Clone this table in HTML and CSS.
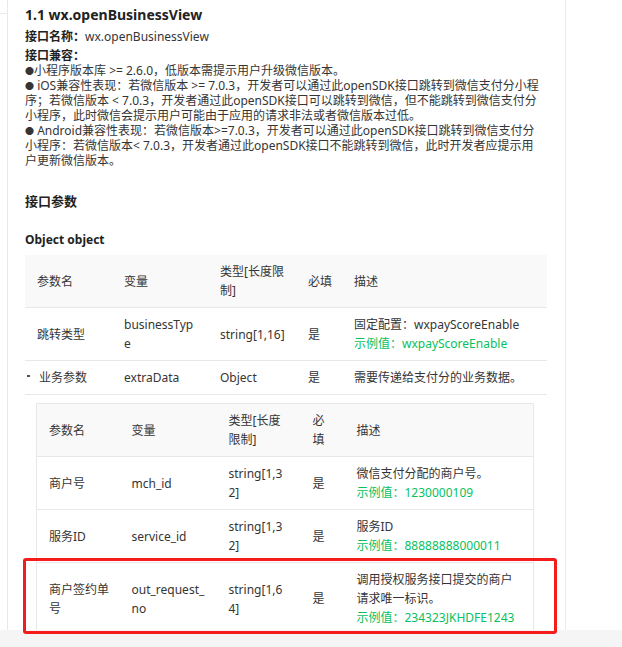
FILE: index.html
```html
<!DOCTYPE html>
<html lang="zh-CN">
<head>
    <meta charset="UTF-8">
    <meta name="viewport" content="width=device-width, initial-scale=1.0">
    <title>wx.openBusinessView</title>
    <link rel="stylesheet" href="styles.css">
</head>
<body>

<div class="screen">
    <div class="page">
        <aside class="sidebar"><div class="sidebar-top"></div></aside>

        <main class="doc">
            <h2 class="title">1.1 wx.openBusinessView</h2>
            <p class="field"><b>接口名称：</b>wx.openBusinessView</p>
            <div class="compat">
                <b>接口兼容：</b><br>
                <span class="dot">●</span>小程序版本库 &gt;= 2.6.0，低版本需提示用户升级微信版本。<br>
                <span class="dot">●</span> iOS兼容性表现：若微信版本 &gt;= 7.0.3，开发者可以通过此openSDK接口跳转到微信支付分小程序；若微信版本 &lt; 7.0.3，开发者通过此openSDK接口可以跳转到微信，但不能跳转到微信支付分小程序，此时微信会提示用户可能由于应用的请求非法或者微信版本过低。<br>
                <span class="dot">●</span> Android兼容性表现：若微信版本&gt;=7.0.3，开发者可以通过此openSDK接口跳转到微信支付分小程序：若微信版本&lt; 7.0.3，开发者通过此openSDK接口不能跳转到微信，此时开发者应提示用户更新微信版本。
            </div>

            <h3 class="section">接口参数</h3>
            <h4 class="obj">Object object</h4>

            <table class="params outer">
                <colgroup>
                    <col style="width: 87px"><col style="width: 96px"><col style="width: 88px"><col style="width: 46px"><col>
                </colgroup>
                <thead>
                    <tr><th>参数名</th><th>变量</th><th>类型[长度限制]</th><th>必填</th><th>描述</th></tr>
                </thead>
                <tbody>
                    <tr>
                        <td>跳转类型</td>
                        <td>businessType</td>
                        <td>string[1,16]</td>
                        <td>是</td>
                        <td>固定配置：wxpayScoreEnable<br><span class="example">示例值：wxpayScoreEnable</span></td>
                    </tr>
                    <tr>
                        <td><span class="toggle"></span>业务参数</td>
                        <td>extraData</td>
                        <td>Object</td>
                        <td>是</td>
                        <td>需要传递给支付分的业务数据。</td>
                    </tr>
                    <tr>
                        <td class="nested-cell" colspan="5">
                            <table class="params inner">
                                <colgroup>
                                    <col style="width: 83px"><col style="width: 97px"><col style="width: 84px"><col style="width: 44px"><col>
                                </colgroup>
                                <thead>
                                    <tr><th>参数名</th><th>变量</th><th>类型[长度限制]</th><th>必填</th><th>描述</th></tr>
                                </thead>
                                <tbody>
                                    <tr>
                                        <td>商户号</td>
                                        <td>mch_id</td>
                                        <td>string[1,32]</td>
                                        <td>是</td>
                                        <td>微信支付分配的商户号。<br><span class="example">示例值：1230000109</span></td>
                                    </tr>
                                    <tr>
                                        <td>服务ID</td>
                                        <td>service_id</td>
                                        <td>string[1,32]</td>
                                        <td>是</td>
                                        <td>服务ID<br><span class="example">示例值：88888888000011</span></td>
                                    </tr>
                                    <tr>
                                        <td>商户签约单号</td>
                                        <td>out_request_no</td>
                                        <td>string[1,64]</td>
                                        <td>是</td>
                                        <td>调用授权服务接口提交的商户请求唯一标识。<br><span class="example">示例值：234323JKHDFE1243</span></td>
                                    </tr>
                                </tbody>
                            </table>
                        </td>
                    </tr>
                </tbody>
            </table>
        </main>

        <div class="right-pane"></div>
    </div>

    <div class="scroll-track"></div>

    <!-- выделение строки -->
    <div class="highlight"></div>
</div>

</body>
</html>
```

FILE: styles.css
```css
* {
    margin: 0;
    padding: 0;
    box-sizing: border-box;
}
body {
    font-family: "Noto Sans", "Noto Sans CJK SC", sans-serif;
    font-size: 12px;
    color: #353535;
    background-color: #fff;
    text-spacing-trim: space-all;
}
.screen {
    position: relative;
    width: 622px;
    height: 647px;
    overflow: hidden;
}
.page {
    display: flex;
    height: 630px;
    overflow: hidden;
}
.sidebar {
    width: 8px;
    flex-shrink: 0;
    border-right: 1px solid #e9e9e9;
}
.sidebar-top {
    height: 14px;
    border-bottom: 1px solid #e9e9e9;
}
.doc {
    width: 558px;
    flex-shrink: 0;
    padding: 5px 0 0 17px;
    border-right: 1px solid #ececec;
}
.right-pane {
    flex: 1;
}
.scroll-track {
    height: 17px;
    background-color: #f5f5f5;
}
.title {
    font-size: 14px;
    font-weight: bold;
    line-height: 20px;
    color: #222;
}
.field {
    margin-top: 3px;
    line-height: 18px;
}
.compat {
    width: 515px;
    margin-top: 2px;
    line-height: 15px;
}
.dot {
    font-size: 9px;
    vertical-align: 1px;
}
b {
    color: #222;
}
.section {
    margin-top: 23px;
    font-size: 13px;
    font-weight: bold;
    line-height: 20px;
    color: #222;
}
.obj {
    margin-top: 19px;
    font-size: 12px;
    font-weight: bold;
    line-height: 20px;
    color: #222;
}
.params {
    border-collapse: collapse;
    table-layout: fixed;
}
.outer {
    width: 522px;
    margin-top: 5px;
}
.inner {
    width: 498px;
    border: 1px solid #e8e8e8;
}
th, td {
    padding: 7px 9px 7px 12px;
    font-size: 12px;
    font-weight: normal;
    line-height: 19px;
    text-align: left;
    vertical-align: middle;
    border-bottom: 1px solid #e8e8e8;
    word-break: break-all;
}
th {
    background-color: #f9f9f9;
}
.outer > tbody > tr:last-child > td {
    border-bottom: none;
}
.nested-cell {
    padding: 8px 13px 0 11px;
}
.example {
    color: #07c160;
}
.toggle {
    display: inline-block;
    width: 3px;
    height: 2px;
    margin: 0 9px 6px -10px;
    background-color: #555;
    vertical-align: middle;
}
.highlight {
    position: absolute;
    left: 23px;
    top: 558px;
    width: 534px;
    height: 76px;
    border: 3px solid #f51c1c;
    border-radius: 3px;
}
```
